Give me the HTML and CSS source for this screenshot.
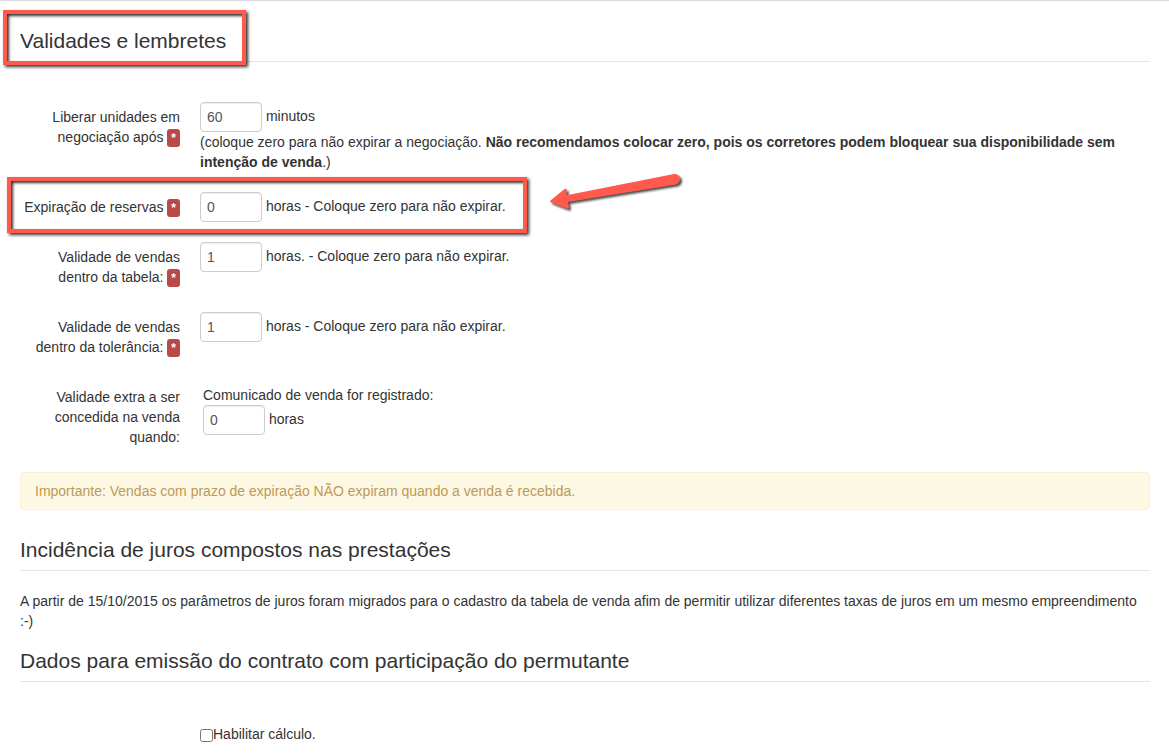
FILE: index.html
```
<!DOCTYPE html>
<html lang="pt-BR">
<head>
    <meta charset="UTF-8">
    <meta name="viewport" content="width=device-width, initial-scale=1.0">
    <title>Validades e lembretes</title>
    <link rel="stylesheet" href="styles.css">
</head>
<body>

    <form class="form-horizontal">

        <!-- Validades e lembretes -->
        <h2 class="legend">Validades e lembretes<span class="marca marca-titulo"></span></h2>

        <div class="campos">
            <div class="control-group">
                <label class="control-label" for="liberar">Liberar unidades em negociação após <span class="obrigatorio">*</span></label>
                <div class="controls">
                    <input type="text" class="input-mini" id="liberar" value="60"> minutos<br>
                    (coloque zero para não expirar a negociação. <strong>Não recomendamos colocar zero, pois os corretores podem bloquear sua disponibilidade sem intenção de venda</strong>.)
                </div>
            </div>

            <div class="control-group">
                <label class="control-label" for="reservas">Expiração de reservas <span class="obrigatorio">*</span></label>
                <div class="controls">
                    <input type="text" class="input-mini" id="reservas" value="0"> horas - Coloque zero para não expirar.
                </div>
                <span class="marca marca-reservas"></span>
                <svg class="seta" width="140" height="50" viewBox="545 167 140 50" aria-hidden="true">
                    <path d="M550.5 200.5 L564.5 189 Q566.5 188 566.8 190 L566.5 195.3 L674 174 A5.3 5.3 0 0 1 676 184.4 L568 202 L569 207 Q569 209.5 566.5 208.5 L551 202.5 Q549.500 201.500 550.500 200.500 Z"/>
                </svg>
            </div>

            <div class="control-group">
                <label class="control-label" for="tabela">Validade de vendas dentro da tabela: <span class="obrigatorio">*</span></label>
                <div class="controls">
                    <input type="text" class="input-mini" id="tabela" value="1"> horas. - Coloque zero para não expirar.
                </div>
            </div>

            <div class="control-group">
                <label class="control-label" for="tolerancia">Validade de vendas dentro da tolerância: <span class="obrigatorio">*</span></label>
                <div class="controls">
                    <input type="text" class="input-mini" id="tolerancia" value="1"> horas - Coloque zero para não expirar.
                </div>
            </div>

            <div class="control-group">
                <label class="control-label" for="extra">Validade extra a ser concedida na venda quando:</label>
                <div class="controls controls-extra">
                    Comunicado de venda for registrado:<br>
                    <input type="text" class="input-mini" id="extra" value="0"> horas
                </div>
            </div>
        </div>

        <div class="alert">Importante: Vendas com prazo de expiração NÃO expiram quando a venda é recebida.</div>

        <!-- Juros -->
        <h2 class="legend">Incidência de juros compostos nas prestações</h2>
        <p>A partir de 15/10/2015 os parâmetros de juros foram migrados para o cadastro da tabela de venda afim de permitir utilizar diferentes taxas de juros em um mesmo empreendimento :-)</p>

        <!-- Permutante -->
        <h2 class="legend">Dados para emissão do contrato com participação do permutante</h2>
        <div class="campos">
            <div class="control-group">
                <div class="controls sem-label">
                    <label class="checkbox"><input type="checkbox" id="calculo">Habilitar cálculo.</label>
                </div>
            </div>
        </div>

    </form>

</body>
</html>
```

FILE: styles.css
```
* {
    box-sizing: border-box;
}

body {
    margin: 0;
    border-top: 1px solid #d9d9de;
    background-color: white;
    color: #333;
    font-family: "Liberation Sans", Arial, Helvetica, sans-serif;
    font-size: 14px;
    line-height: 20px;
}

.form-horizontal {
    padding: 20px 19px 0 20px;
}

.legend {
    position: relative;
    margin: 0 0 20px;
    border-bottom: 1px solid #e5e5e5;
    font-size: 21px;
    font-weight: normal;
    line-height: 40px;
}

p {
    margin: 0 0 10px;
}

/* Linhas do formulário */
.campos {
    padding-top: 20px;
}

.control-group {
    position: relative;
    display: flex;
    gap: 20px;
    margin-bottom: 20px;
}

.control-label {
    flex: none;
    width: 160px;
    padding: 5px 0;
    text-align: right;
}

.controls {
    flex: 1;
}

.controls-extra {
    padding: 3px;
}

.sem-label {
    margin-left: 180px;
}

.input-mini {
    width: 62px;
    height: 30px;
    margin: 0;
    padding: 4px 6px;
    border: 1px solid #ccc;
    border-radius: 4px;
    background-color: white;
    box-shadow: inset 0 1px 1px rgba(0, 0, 0, 0.075);
    color: #555;
    font: inherit;
    vertical-align: middle;
}

.checkbox {
    display: inline-block;
    padding-top: 2px;
}

.checkbox input {
    width: 13px;
    height: 13px;
    margin: 0;
    vertical-align: -3px;
}

.obrigatorio {
    display: inline-block;
    padding: 2px 4px;
    border-radius: 3px;
    background-color: #b94a48;
    color: white;
    font-size: 12px;
    font-weight: bold;
    line-height: 14px;
    text-shadow: 0 -1px 0 rgba(0, 0, 0, 0.25);
    vertical-align: baseline;
}

.alert {
    margin-bottom: 20px;
    padding: 8px 14px;
    border: 1px solid #fbeed5;
    border-radius: 4px;
    background-color: #fcf8e3;
    color: #c09853;
    text-shadow: 0 1px 0 rgba(255, 255, 255, 0.5);
}

/* Destaques em vermelho */
.marca {
    position: absolute;
    border: 4px solid #ff5a4c;
    box-shadow: 2px 2px 3px rgba(0, 0, 0, 0.8), inset 2px 2px 3px rgba(0, 0, 0, 0.8);
    pointer-events: none;
}

.marca-titulo {
    top: -11px;
    left: -17px;
    width: 243px;
    height: 55px;
}

.marca-reservas {
    top: -15px;
    left: -13px;
    width: 520px;
    height: 56px;
}

.seta {
    position: absolute;
    top: -25px;
    left: 525px;
    fill: #ff5a4c;
    filter: drop-shadow(2px 2px 1px rgba(0, 0, 0, 0.7));
    overflow: visible;
    pointer-events: none;
}
```
